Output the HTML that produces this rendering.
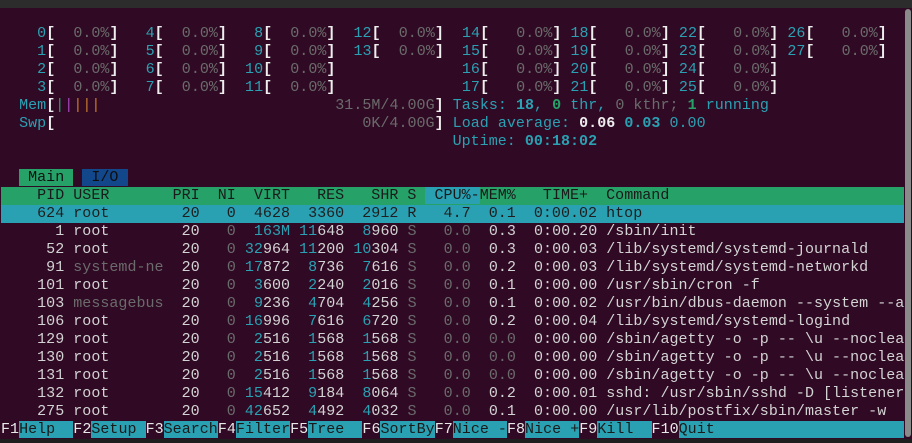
<!DOCTYPE html>
<html><head><meta charset="utf-8"><style>
html,body{margin:0;padding:0;}
body{width:912px;height:443px;background:#300a24;position:relative;overflow:hidden;font-family:"Liberation Mono",monospace;font-size:15px;letter-spacing:0.03px;color:#d3d3d3;}
.l{position:absolute;left:1px;height:18px;line-height:18px;white-space:pre;}
c{color:#2aa1b3}
w{color:#eeeeee;font-weight:bold}
g{color:#6b6b6b}
gr{color:#26a269}
b{font-weight:bold}
.hdr{background:#26a269;color:#1a1a1a;width:903px}
.sel{background:#2aa1b3;color:#1e1e1e;width:903px}
.cy{background:#2aa1b3}
.tm{background:#26a269;color:#111}
.ti{background:#12488b;color:#0e0e0e}
.fb{background:#2aa1b3;color:#1a1a1a}
.ft{color:#e8e8e8}
</style></head><body>
<div style="position:absolute;left:0;top:0;width:912px;height:8px;background:#2c2c2c"></div>
<div style="position:absolute;left:905px;top:9px;width:6px;height:428px;background:#8a8a8a;border-radius:3px"></div>
<div style="position:absolute;left:0;top:439px;width:912px;height:4px;background:#1e1e1e"></div>

<div class="l" style="top:25px">    <c>0</c><w>[</w>  <g>0.0%</g><w>]</w>   <c>4</c><w>[</w>  <g>0.0%</g><w>]</w>   <c>8</c><w>[</w>  <g>0.0%</g><w>]</w>  <c>12</c><w>[</w>  <g>0.0%</g><w>]</w>  <c>14</c><w>[</w>   <g>0.0%</g><w>]</w> <c>18</c><w>[</w>   <g>0.0%</g><w>]</w> <c>22</c><w>[</w>   <g>0.0%</g><w>]</w> <c>26</c><w>[</w>   <g>0.0%</g><w>]</w></div>
<div class="l" style="top:43px">    <c>1</c><w>[</w>  <g>0.0%</g><w>]</w>   <c>5</c><w>[</w>  <g>0.0%</g><w>]</w>   <c>9</c><w>[</w>  <g>0.0%</g><w>]</w>  <c>13</c><w>[</w>  <g>0.0%</g><w>]</w>  <c>15</c><w>[</w>   <g>0.0%</g><w>]</w> <c>19</c><w>[</w>   <g>0.0%</g><w>]</w> <c>23</c><w>[</w>   <g>0.0%</g><w>]</w> <c>27</c><w>[</w>   <g>0.0%</g><w>]</w></div>
<div class="l" style="top:61px">    <c>2</c><w>[</w>  <g>0.0%</g><w>]</w>   <c>6</c><w>[</w>  <g>0.0%</g><w>]</w>  <c>10</c><w>[</w>  <g>0.0%</g><w>]</w>              <c>16</c><w>[</w>   <g>0.0%</g><w>]</w> <c>20</c><w>[</w>   <g>0.0%</g><w>]</w> <c>24</c><w>[</w>   <g>0.0%</g><w>]</w></div>
<div class="l" style="top:79px">    <c>3</c><w>[</w>  <g>0.0%</g><w>]</w>   <c>7</c><w>[</w>  <g>0.0%</g><w>]</w>  <c>11</c><w>[</w>  <g>0.0%</g><w>]</w>              <c>17</c><w>[</w>   <g>0.0%</g><w>]</w> <c>21</c><w>[</w>   <g>0.0%</g><w>]</w> <c>25</c><w>[</w>   <g>0.0%</g><w>]</w></div>
<div class="l" style="top:97px">  <c>Mem</c><w>[</w><gr>|</gr><span style="color:#a347ba">|</span><span style="color:#c7782e">|||</span>                          <g>31.5M/4.00G</g><w>]</w> <c>Tasks: <b>18</b>, </c><gr><b>0</b></gr><c> thr, </c><g>0 kthr;</g> <gr><b>1</b></gr><c> running</c></div>
<div class="l" style="top:115px">  <c>Swp</c><w>[</w>                                  <g>0K/4.00G</g><w>]</w> <c>Load average: </c><w>0.06</w> <c><b>0.03</b> 0.00</c></div>
<div class="l" style="top:133px">                                                  <c>Uptime: <b>00:18:02</b></c></div>

<div class="l" style="top:169px;color:#111">  <span class="tm"> Main </span> <span class="ti"> I/O </span></div>
<div class="l hdr" style="top:187px">    PID USER       PRI  NI  VIRT   RES   SHR S <span class="cy"> CPU%-</span>MEM%   TIME+  Command</div>
<div class="l sel" style="top:205px">    624 root        20   0  4628  3360  2912 R   4.7  0.1  0:00.02 htop</div>
<div class="l" style="top:223px">      1 root        20   <g>0</g>  <c>163M</c> <c>11</c>648  <c>8</c>960 <g>S   0.0</g>  0.3  0:00.20 /sbin/init</div>
<div class="l" style="top:241px">     52 root        20   <g>0</g> <c>32</c>964 <c>11</c>200 <c>10</c>304 <g>S   0.0</g>  0.3  0:00.03 /lib/systemd/systemd-journald</div>
<div class="l" style="top:259px">     91 <g>systemd-ne</g>  20   <g>0</g> <c>17</c>872  <c>8</c>736  <c>7</c>616 <g>S   0.0</g>  0.2  0:00.03 /lib/systemd/systemd-networkd</div>
<div class="l" style="top:277px">    101 root        20   <g>0</g>  <c>3</c>600  <c>2</c>240  <c>2</c>016 <g>S   0.0</g>  0.1  0:00.00 /usr/sbin/cron -f</div>
<div class="l" style="top:295px">    103 <g>messagebus</g>  20   <g>0</g>  <c>9</c>236  <c>4</c>704  <c>4</c>256 <g>S   0.0</g>  0.1  0:00.02 /usr/bin/dbus-daemon --system --a</div>
<div class="l" style="top:313px">    106 root        20   <g>0</g> <c>16</c>996  <c>7</c>616  <c>6</c>720 <g>S   0.0</g>  0.2  0:00.04 /lib/systemd/systemd-logind</div>
<div class="l" style="top:331px">    129 root        20   <g>0</g>  <c>2</c>516  <c>1</c>568  <c>1</c>568 <g>S   0.0  0.0</g>  0:00.00 /sbin/agetty -o -p -- \u --noclea</div>
<div class="l" style="top:349px">    130 root        20   <g>0</g>  <c>2</c>516  <c>1</c>568  <c>1</c>568 <g>S   0.0  0.0</g>  0:00.00 /sbin/agetty -o -p -- \u --noclea</div>
<div class="l" style="top:367px">    131 root        20   <g>0</g>  <c>2</c>516  <c>1</c>568  <c>1</c>568 <g>S   0.0  0.0</g>  0:00.00 /sbin/agetty -o -p -- \u --noclea</div>
<div class="l" style="top:385px">    132 root        20   <g>0</g> <c>15</c>412  <c>9</c>184  <c>8</c>064 <g>S   0.0</g>  0.2  0:00.01 sshd: /usr/sbin/sshd -D [listener</div>
<div class="l" style="top:403px">    275 root        20   <g>0</g> <c>42</c>652  <c>4</c>492  <c>4</c>032 <g>S   0.0</g>  0.1  0:00.00 /usr/lib/postfix/sbin/master -w</div>
<div class="l" style="top:421px"><span class="ft">F1</span><span class="fb">Help  </span><span class="ft">F2</span><span class="fb">Setup </span><span class="ft">F3</span><span class="fb">Search</span><span class="ft">F4</span><span class="fb">Filter</span><span class="ft">F5</span><span class="fb">Tree  </span><span class="ft">F6</span><span class="fb">SortBy</span><span class="ft">F7</span><span class="fb">Nice -</span><span class="ft">F8</span><span class="fb">Nice +</span><span class="ft">F9</span><span class="fb">Kill  </span><span class="ft">F10</span><span class="fb">Quit                     </span></div>
</body></html>
